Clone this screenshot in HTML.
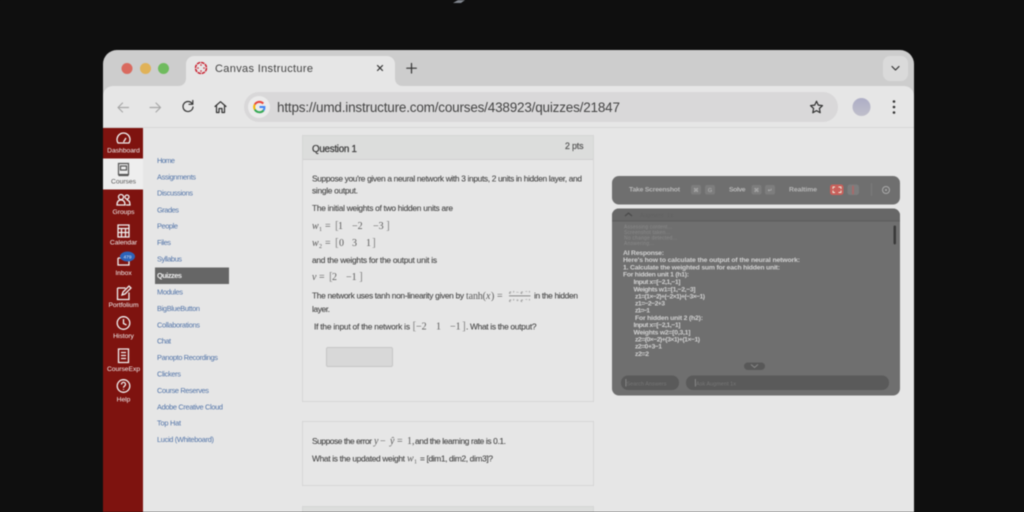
<!DOCTYPE html>
<html lang="en"><head><meta charset="utf-8"><title>Canvas Instructure</title>
<style>
html,body{margin:0;padding:0;width:1024px;height:512px;overflow:hidden;background:#0f0f0f}
svg{display:block;filter:blur(.5px)}
text{font-family:"Liberation Sans",sans-serif;white-space:pre}
.m{font-family:"Liberation Serif",serif;font-size:10px;fill:#5c5c5c}
.mi{font-family:"Liberation Serif",serif;font-size:10px;font-style:italic;fill:#5c5c5c}
.b{font-family:"Liberation Serif",serif;font-size:11.5px;fill:#888}
.p{font-size:8.4px;fill:#444;stroke:#444;stroke-width:.08}
.n{font-size:7.4px;fill:#5274a8}
.s{font-size:6.7px;fill:#f2f2f2;text-anchor:middle}
.r{font-size:6.8px;fill:#d2d2d2;font-weight:bold}
.k{font-size:6.8px;fill:#b8b8b8;font-weight:bold}
.st{font-size:5px;fill:#8a8a8a}
.ic{fill:none;stroke:#f0f0f0;stroke-width:1.3}
.tb{fill:none;stroke:#333;stroke-width:1.2;stroke-linecap:round;stroke-linejoin:round}
</style></head><body>
<svg width="1024" height="512" viewBox="0 0 1024 512" xmlns="http://www.w3.org/2000/svg">
<rect width="1024" height="512" fill="#0f0f0f"/>
<path d="M453 3h8l4-3h-7z" fill="#7f848c"/>

<!-- window -->
<path d="M103 512V64a14 14 0 0 1 14-14H900a14 14 0 0 1 14 14V512z" fill="#cdcdcd"/>
<path d="M103 512V96a10 10 0 0 1 10-10H904a10 10 0 0 1 10 10V512z" fill="#e6e6e6"/>
<circle cx="127" cy="68.500" r="5.500" fill="#d96a5f"/>
<circle cx="145.500" cy="68.500" r="5.500" fill="#e0b258"/>
<circle cx="163.500" cy="68.500" r="5.500" fill="#6fbb5e"/>
<path d="M178 86c5 0 8-3 8-8V64a8 8 0 0 1 8-8H387a8 8 0 0 1 8 8V78c0 5 3 8 8 8z" fill="#e6e6e6"/>
<!-- canvas logo -->
<g fill="#c8202f"><circle cx="201" cy="65" r=".8"/><circle cx="201" cy="71" r=".8"/><circle cx="198" cy="68" r=".8"/><circle cx="204" cy="68" r=".8"/></g>
<circle cx="201" cy="68" r="5.500" fill="none" stroke="#c8202f" stroke-width="1.500" stroke-dasharray="3.500 .8"/>
<text x="215" y="72" font-size="11" fill="#444" textLength="98">Canvas Instructure</text>
<path d="M377.500 65.500l5 5M382.500 65.500l-5 5" class="tb"/>
<path d="M411.500 63.500v9.500M406.800 68.200h9.500" class="tb"/>
<rect x="883" y="56" width="25" height="25" rx="7" fill="#dadada"/>
<path d="M892 66.500l3.500 3.500 3.500-3.500" class="tb"/>

<!-- toolbar -->
<path d="M118 107.500h10.500M118 107.500l4.500-4.500M118 107.500l4.500 4.500" class="tb" style="stroke:#a8a8a8"/>
<path d="M150 107.500h10.500M160.500 107.500l-4.500-4.500M160.500 107.500l-4.500 4.500" class="tb" style="stroke:#a8a8a8"/>
<path d="M192 103.500a5 5 0 1 0 1 3.500M192.800 100.500v3.800h-3.800" class="tb"/>
<path d="M215 106.500l5.500-4.800 5.500 4.800M216.500 105.500v7h2.500v-4h3v4h2.500v-7" class="tb"/>
<rect x="244" y="92" width="594" height="30" rx="15" fill="#d9d8d9"/>
<circle cx="259" cy="107" r="11" fill="#ebebeb"/>
<g fill="none" stroke-width="2"><path d="M263.300 103.500a5.400 5.400 0 0 0-8.500 1" stroke="#e8453c"/><path d="M254.800 104.500a5.400 5.400 0 0 0 0 5" stroke="#f4b400"/><path d="M254.800 109.500a5.400 5.400 0 0 0 8.800 .8" stroke="#34a853"/><path d="M263.600 110.300a5.400 5.400 0 0 0 .8-3.300H259.500" stroke="#4285f4"/></g>
<text x="277" y="112" font-size="13.500" fill="#444" textLength="343">https://umd.instructure.com/courses/438923/quizzes/21847</text>
<path d="M816.500 101.200l1.800 3.900 4.200.5-3.100 2.900.8 4.200-3.700-2.100-3.700 2.100.8-4.200-3.100-2.900 4.200-.5z" class="tb"/>
<defs><linearGradient id="av" x1="0" y1="0" x2="0" y2="1"><stop offset="0" stop-color="#aeaec6"/><stop offset="1" stop-color="#c0bfcb"/></linearGradient></defs>
<circle cx="861.500" cy="107" r="9" fill="url(#av)"/>
<g fill="#333"><circle cx="894" cy="101.500" r="1.300"/><circle cx="894" cy="107" r="1.300"/><circle cx="894" cy="112.500" r="1.300"/></g>
<rect x="103" y="127" width="811" height="1" fill="#d6d6d6"/>

<!-- sidebar -->
<rect x="103" y="128" width="40" height="384" fill="#7e130f"/>
<rect x="103" y="158.500" width="40" height="31" fill="#eeeeee"/>
<path class="ic" d="M118 143a6.500 6.500 0 1 1 11 0zM123.500 142l2.500-4"/>
<text class="s" x="123.500" y="152.500">Dashboard</text>
<path d="M118.500 163.500h10v11h-10zM120.500 166h6v4h-6zM118.500 175.500h10" fill="none" stroke="#555" stroke-width="1.200"/>
<text class="s" x="123.500" y="183.500" style="fill:#555">Courses</text>
<path class="ic" d="M117 205c0-4 2-5 4-5s4 1 4 5zM121 199.500a2.500 2.500 0 1 0 0-5 2.500 2.500 0 0 0 0 5zM127 199a2 2 0 1 0 0-4 2 2 0 0 0 0 4zM126 205h4c0-3-1-5-3.500-5"/>
<text class="s" x="123.500" y="214">Groups</text>
<path class="ic" d="M118 225h11v12h-11zM118 228.500h11M121.500 228.500v8.500M125.500 228.500v8.500M118 232.500h11"/>
<text class="s" x="123.500" y="244.500">Calendar</text>
<path class="ic" d="M118 258v7h11v-7M118 258h11M120 256h7"/>
<ellipse cx="127.500" cy="256.500" rx="7.500" ry="5" fill="#2d63b8"/>
<text x="127.500" y="258.500" font-size="4.800" fill="#dbe5f5" text-anchor="middle">479</text>
<text class="s" x="123.500" y="275">Inbox</text>
<path class="ic" d="M117.500 288h8M117.500 288v11.500h11.500v-7M122 295l1-3 6-6 2 2-6 6z"/>
<text class="s" x="123.500" y="307">Portfolium</text>
<circle class="ic" cx="123.500" cy="323" r="6.300"/><path class="ic" d="M123.500 319v4.500l3 1.500"/>
<text class="s" x="123.500" y="338">History</text>
<path class="ic" d="M118.500 349h10v13.500h-10zM121 352.500h5M121 355.500h5M121 358.500h5"/>
<text class="s" x="123.500" y="371">CourseExp</text>
<circle class="ic" cx="123.500" cy="386" r="6.300"/><path class="ic" d="M121.500 384.500c0-3 4-3 4 0 0 1.500-2 1.500-2 3.200M123.500 389v.8"/>
<text class="s" x="123.500" y="401.500">Help</text>

<!-- course nav -->
<g>
<text class="n" x="157" y="163" textLength="18">Home</text>
<text class="n" x="157" y="179.500" textLength="39">Assignments</text>
<text class="n" x="157" y="195.500" textLength="36">Discussions</text>
<text class="n" x="157" y="212.500" textLength="22">Grades</text>
<text class="n" x="157" y="228.500" textLength="21">People</text>
<text class="n" x="157" y="245" textLength="14">Files</text>
<text class="n" x="157" y="261.500" textLength="25">Syllabus</text>
<rect x="155" y="267.500" width="74" height="16.500" fill="#666"/>
<text x="157" y="278" font-size="7.400" font-weight="bold" fill="#eee" textLength="25">Quizzes</text>
<text class="n" x="157" y="294.500" textLength="26">Modules</text>
<text class="n" x="157" y="311" textLength="43">BigBlueButton</text>
<text class="n" x="157" y="327.500" textLength="43">Collaborations</text>
<text class="n" x="157" y="343.500" textLength="14">Chat</text>
<text class="n" x="157" y="360" textLength="61">Panopto Recordings</text>
<text class="n" x="157" y="376.500" textLength="24">Clickers</text>
<text class="n" x="157" y="393" textLength="52">Course Reserves</text>
<text class="n" x="157" y="409.500" textLength="66">Adobe Creative Cloud</text>
<text class="n" x="157" y="425.500" textLength="24">Top Hat</text>
<text class="n" x="157" y="442" textLength="57">Lucid (Whiteboard)</text>
</g>

<!-- card 1 -->
<rect x="302.500" y="135.500" width="291" height="266" fill="#e6e6e6" stroke="#d6d6d6"/>
<rect x="303" y="136" width="290" height="23" fill="#dcdddc"/>
<rect x="303" y="159" width="290" height="1" fill="#d0d0d0"/>
<text x="312" y="152" font-size="9.800" fill="#3c3c3c" stroke="#3c3c3c" stroke-width=".25" textLength="45">Question 1</text>
<text x="565" y="149" font-size="8.800" fill="#555" stroke="#555" stroke-width=".2" textLength="18.500">2 pts</text>
<text class="p" x="312" y="181.500" textLength="270">Suppose you're given a neural network with 3 inputs, 2 units in hidden layer, and</text>
<text class="p" x="312" y="193.500" textLength="46">single output.</text>
<text class="p" x="312" y="211" textLength="141">The initial weights of two hidden units are</text>
<text class="mi" x="312" y="229">w</text><text class="m" x="319" y="231" style="font-size:6px">1</text>
<text class="m" x="325" y="229">=</text><text class="b" x="335" y="229">[</text>
<text class="m" x="338" y="229">1</text><text class="m" x="352" y="229">−2</text><text class="m" x="373" y="229">−3</text><text class="b" x="386" y="229">]</text>
<text class="mi" x="312" y="246">w</text><text class="m" x="319" y="248" style="font-size:6px">2</text>
<text class="m" x="325" y="246">=</text><text class="b" x="335" y="246">[</text>
<text class="m" x="339" y="246">0</text><text class="m" x="352" y="246">3</text><text class="m" x="366" y="246">1</text><text class="b" x="372" y="246">]</text>
<text class="p" x="312" y="263" textLength="125">and the weights for the output unit is</text>
<text class="mi" x="312" y="280">v</text><text class="m" x="319" y="280">=</text><text class="b" x="329" y="280">[</text>
<text class="m" x="332" y="280">2</text><text class="m" x="346" y="280">−1</text><text class="b" x="359" y="280">]</text>
<text class="p" x="312" y="298.500" textLength="152">The network uses tanh non-linearity given by</text>
<text class="m" x="466" y="299" textLength="20">tanh(</text><text class="mi" x="486" y="299">x</text><text class="m" x="491" y="299">)</text><text class="m" x="497" y="299">=</text>
<text class="mi" x="509" y="294" style="font-size:5px" textLength="21">eˣ−e⁻ˣ</text><rect x="509" y="295.500" width="21.500" height=".7" fill="#666"/><text class="mi" x="509" y="302" style="font-size:5px" textLength="21">eˣ+e⁻ˣ</text>
<text class="p" x="534" y="298.500" textLength="44">in the hidden</text>
<text class="p" x="312" y="312" textLength="18">layer.</text>
<text class="p" x="314" y="329.500" textLength="96">If the input of the network is</text>
<text class="b" x="412.500" y="329.500">[</text><text class="m" x="416" y="329.500">−2</text><text class="m" x="436" y="329.500">1</text><text class="m" x="450" y="329.500">−1</text><text class="b" x="462" y="329.500">]</text>
<text class="p" x="466" y="329.500" textLength="70.500">. What is the output?</text>
<rect x="326.500" y="347.500" width="66" height="19" rx="1.500" fill="#d8d8d8" stroke="#c6c6c6"/>

<!-- card 2 -->
<rect x="302.500" y="421.500" width="291" height="64" fill="#e6e6e6" stroke="#d6d6d6"/>
<text class="p" x="312" y="444" textLength="60">Suppose the error</text>
<text class="mi" x="374" y="444">y</text><text class="m" x="380" y="444">−</text><text class="mi" x="390" y="444">ŷ</text><text class="m" x="397" y="444">=</text><text class="m" x="407" y="444">1,</text>
<text class="p" x="415" y="444" textLength="91">and the learning rate is 0.1.</text>
<text class="p" x="312" y="461.500" textLength="93">What is the updated weight</text>
<text class="mi" x="407" y="461.500">w</text><text class="m" x="414" y="463.500" style="font-size:6px">1</text>
<text class="p" x="420" y="461.500" textLength="73">= [dim1, dim2, dim3]?</text>

<!-- card 3 -->
<rect x="302.500" y="506.500" width="291" height="10" fill="#dcdddc" stroke="#d6d6d6"/>

<!-- overlay toolbar -->
<rect x="612" y="176" width="288" height="28.500" rx="7" fill="#6f6f6f"/>
<text class="k" x="629" y="191.500" textLength="51">Take Screenshot</text>
<rect x="691" y="185" width="10" height="9.500" rx="2" fill="#7d7d7d"/><text x="696" y="192" font-size="5.500" fill="#bbb" text-anchor="middle">⌘</text>
<rect x="705" y="185" width="10" height="9.500" rx="2" fill="#7d7d7d"/><text x="710" y="192" font-size="5.500" fill="#bbb" text-anchor="middle">G</text>
<text class="k" x="729" y="191.500" textLength="16.500">Solve</text>
<rect x="751.500" y="185" width="10" height="9.500" rx="2" fill="#7d7d7d"/><text x="756.500" y="192" font-size="5.500" fill="#bbb" text-anchor="middle">⌘</text>
<rect x="765" y="185" width="10" height="9.500" rx="2" fill="#7d7d7d"/><text x="770" y="192" font-size="5.500" fill="#bbb" text-anchor="middle">↵</text>
<text class="k" x="789" y="191.500" textLength="28">Realtime</text>
<rect x="830" y="184.500" width="13.500" height="10.500" rx="2.500" fill="#c9605b"/>
<path d="M833 189v-2h2M838.500 187h2.500v2M841 190.500v2h-2.500M835 192.500h-2v-2" fill="none" stroke="#eed" stroke-width=".9"/>
<rect x="847.500" y="184.500" width="11.500" height="10.500" rx="2.500" fill="#7d7d7d"/>
<path d="M853 186.500v4M853 191.500v2" stroke="#a56b6b" stroke-width="2" stroke-linecap="round"/>
<rect x="871" y="183" width="1" height="13" fill="#7b7b7b"/>
<circle cx="886" cy="190" r="3.500" fill="none" stroke="#aaa" stroke-width="1"/><circle cx="886" cy="190" r="1" fill="#aaa"/>

<!-- overlay panel -->
<rect x="612" y="208.500" width="288" height="187" rx="7" fill="#6f6f6f"/>
<path d="M612 220.500v-5a7 7 0 0 1 7-7h274a7 7 0 0 1 7 7v5z" fill="#676767"/>
<rect x="612" y="220.500" width="288" height="1" fill="#5c5c5c"/>
<path d="M625 216l3.500-3 3.500 3" fill="none" stroke="#4a4a4a" stroke-width="1.200"/>
<text x="640" y="217" font-size="5.500" fill="#616161" textLength="33">Augment  1x</text>
<rect x="893.500" y="225.500" width="2.500" height="19" rx="1.200" fill="#3a3a3a"/>
<text class="st" x="624" y="228.500" textLength="48">Assessing content...</text>
<text class="st" x="624" y="234" textLength="46">Screenshot taken...</text>
<text class="st" x="624" y="239.500" textLength="53">No change detected...</text>
<text class="st" x="624" y="245" textLength="30">Answering...</text>
<text class="r" x="623" y="255" textLength="41">AI Response:</text>
<text class="r" x="623" y="262" textLength="177">Here's how to calculate the output of the neural network:</text>
<text class="r" x="623" y="269.500" textLength="157">1. Calculate the weighted sum for each hidden unit:</text>
<text class="r" x="623" y="276.500" textLength="66">For hidden unit 1 (h1):</text>
<text class="r" x="633.500" y="284" textLength="47">Input x=[−2,1,−1]</text>
<text class="r" x="633.500" y="291.500" textLength="62">Weights w1=[1,−2,−3]</text>
<text class="r" x="635" y="298.500" textLength="70">z1=(1×−2)+(−2×1)+(−3×−1)</text>
<text class="r" x="635" y="305.500" textLength="30">z1=−2−2+3</text>
<text class="r" x="635" y="312.500" textLength="15">z1=−1</text>
<text class="r" x="635" y="320" textLength="68">For hidden unit 2 (h2):</text>
<text class="r" x="633.500" y="327" textLength="47">Input x=[−2,1,−1]</text>
<text class="r" x="633.500" y="334.500" textLength="57">Weights w2=[0,3,1]</text>
<text class="r" x="635" y="341.500" textLength="65">z2=(0×−2)+(3×1)+(1×−1)</text>
<text class="r" x="635" y="348.500" textLength="27">z2=0+3−1</text>
<text class="r" x="635" y="356" textLength="14">z2=2</text>
<rect x="744" y="362.500" width="21" height="7.500" rx="3.700" fill="#585858"/>
<path d="M751 364.500l3.500 3 3.500-3" fill="none" stroke="#888" stroke-width="1"/>
<rect x="621" y="375.500" width="58" height="14.500" rx="7" fill="#5a5a5a"/>
<rect x="625.500" y="379" width=".7" height="7.500" fill="#999"/>
<text x="626.500" y="385.500" font-size="5.500" fill="#767676" textLength="40">Search Answers</text>
<rect x="686" y="375.500" width="203" height="14.500" rx="7" fill="#5a5a5a"/>
<rect x="695" y="379" width=".7" height="7.500" fill="#999"/>
<text x="696" y="385.500" font-size="5.500" fill="#767676" textLength="40">Ask Augment 1x</text>
</svg>
</body></html>
